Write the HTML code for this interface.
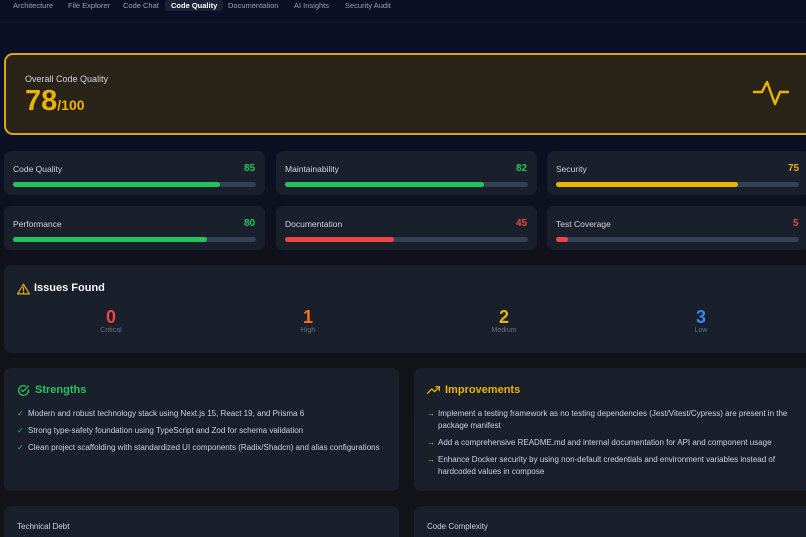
<!DOCTYPE html>
<html style="width:806px;height:537px;overflow:hidden"><head><style>
*{margin:0;padding:0;box-sizing:border-box}
body{width:806px;height:537px;overflow:hidden;font-family:"Liberation Sans",sans-serif;background:linear-gradient(#0a0f25 0,#0b1024 140px,#111318 300px,#121419 537px);color:#e5e7eb;position:relative}
.nav{position:absolute;top:0;left:0;width:806px;height:23px;border-bottom:1px solid #161b30;font-size:7.5px;color:#9ca3af}
.nav span{position:absolute;top:0;line-height:11px}
.tab{background:#1c2236;color:#fff;padding:0 6px;border-radius:3px;font-weight:bold}
.card{position:absolute;background:#1a1f2c;border-radius:7px}
.hero{position:absolute;left:4px;top:53px;width:810px;height:82px;background:#2a2418;border:2px solid #d4a614;border-radius:9px}
.lbl{position:absolute;font-size:8.5px;color:#d1d5db}
.val{position:absolute;font-size:10px;font-weight:bold}
.bar{position:absolute;height:5px;border-radius:3px;background:#334155}
.bar i{display:block;height:5px;border-radius:3px}
.g{color:#22c55e}.r{color:#ef4444}.y{color:#eab308}.o{color:#f97316}.b{color:#3b82f6}
ul{list-style:none}
li{font-size:8px;color:#cbd5e1;position:relative;padding-left:11px;line-height:12px;margin-bottom:5px}
li b{position:absolute;left:0;font-weight:normal}
</style></head><body>
<div class="nav">
<span style="left:13px">Architecture</span>
<span style="left:68px">File Explorer</span>
<span style="left:123px">Code Chat</span>
<span class="tab" style="left:165px">Code Quality</span>
<span style="left:228px">Documentation</span>
<span style="left:294px">AI Insights</span>
<span style="left:345px">Security Audit</span>
</div>
<div class="hero">
<div style="position:absolute;left:19px;top:19px;font-size:9px;color:#d1d5db">Overall Code Quality</div>
<div style="position:absolute;left:19px;top:30px;color:#eab308;font-weight:bold"><span style="font-size:29px">78</span><span style="font-size:14px">/100</span></div>
<svg style="position:absolute;left:746px;top:22px" width="38" height="34" viewBox="0 0 38 34"><path d="M2 15h8l5-10 8 22 5-12h8" fill="none" stroke="#eab308" stroke-width="2.4" stroke-linecap="round" stroke-linejoin="round"/></svg>
</div>

<div class="card" style="left:4px;top:151px;width:261px;height:44px"></div>
<div class="card" style="left:276px;top:151px;width:261px;height:44px"></div>
<div class="card" style="left:547px;top:151px;width:262px;height:44px"></div>
<div class="card" style="left:4px;top:206px;width:261px;height:44px"></div>
<div class="card" style="left:276px;top:206px;width:261px;height:44px"></div>
<div class="card" style="left:547px;top:206px;width:262px;height:44px"></div>

<div class="lbl" style="left:13px;top:164px">Code Quality</div><div class="val g" style="left:244px;top:163px">85</div>
<div class="bar" style="left:13px;top:182px;width:243px"><i style="width:85%;background:#22c55e"></i></div>
<div class="lbl" style="left:285px;top:164px">Maintainability</div><div class="val g" style="left:516px;top:163px">82</div>
<div class="bar" style="left:285px;top:182px;width:243px"><i style="width:82%;background:#22c55e"></i></div>
<div class="lbl" style="left:556px;top:164px">Security</div><div class="val y" style="left:788px;top:163px">75</div>
<div class="bar" style="left:556px;top:182px;width:243px"><i style="width:75%;background:#eab308"></i></div>

<div class="lbl" style="left:13px;top:219px">Performance</div><div class="val g" style="left:244px;top:218px">80</div>
<div class="bar" style="left:13px;top:237px;width:243px"><i style="width:80%;background:#22c55e"></i></div>
<div class="lbl" style="left:285px;top:219px">Documentation</div><div class="val r" style="left:516px;top:218px">45</div>
<div class="bar" style="left:285px;top:237px;width:243px"><i style="width:45%;background:#ef4444"></i></div>
<div class="lbl" style="left:556px;top:219px">Test Coverage</div><div class="val r" style="left:793px;top:218px">5</div>
<div class="bar" style="left:556px;top:237px;width:243px"><i style="width:5%;background:#ef4444"></i></div>

<div class="card" style="left:4px;top:265px;width:810px;height:88px">
<svg style="position:absolute;left:13px;top:18px" width="13" height="12" viewBox="0 0 24 22"><path d="M12 2L1 20h22z M12 8v6 M12 17v1" fill="none" stroke="#eab308" stroke-width="2.2" stroke-linejoin="round" stroke-linecap="round"/></svg>
<div style="position:absolute;left:30px;top:17px;font-size:11px;font-weight:bold;color:#f3f4f6">Issues Found</div>
</div>
<div style="position:absolute;left:61px;width:100px;top:307px;text-align:center"><div class="r" style="font-size:18px;font-weight:bold;line-height:20px">0</div><div style="font-size:7px;color:#64748b">Critical</div></div>
<div style="position:absolute;left:258px;width:100px;top:307px;text-align:center"><div class="o" style="font-size:18px;font-weight:bold;line-height:20px">1</div><div style="font-size:7px;color:#64748b">High</div></div>
<div style="position:absolute;left:454px;width:100px;top:307px;text-align:center"><div class="y" style="font-size:18px;font-weight:bold;line-height:20px">2</div><div style="font-size:7px;color:#64748b">Medium</div></div>
<div style="position:absolute;left:651px;width:100px;top:307px;text-align:center"><div class="b" style="font-size:18px;font-weight:bold;line-height:20px">3</div><div style="font-size:7px;color:#64748b">Low</div></div>

<div class="card" style="left:4px;top:368px;width:395px;height:123px">
<svg style="position:absolute;left:13px;top:16px" width="13" height="13" viewBox="0 0 24 24"><path d="M21 11v1a9 9 0 1 1-5.3-8.2 M8 11l3 3 10-10" fill="none" stroke="#22c55e" stroke-width="2.4" stroke-linecap="round" stroke-linejoin="round"/></svg>
<div style="position:absolute;left:31px;top:16px;font-size:11px;font-weight:bold;color:#22c55e">Strengths</div>
<ul style="position:absolute;left:13px;top:40px;width:380px">
<li><b class="g">✓</b>Modern and robust technology stack using Next.js 15, React 19, and Prisma 6</li>
<li><b class="g">✓</b>Strong type-safety foundation using TypeScript and Zod for schema validation</li>
<li><b class="g">✓</b>Clean project scaffolding with standardized UI components (Radix/Shadcn) and alias configurations</li>
</ul></div>

<div class="card" style="left:414px;top:368px;width:400px;height:123px">
<svg style="position:absolute;left:13px;top:17px" width="13" height="10" viewBox="0 0 24 16"><path d="M1 14l8-8 5 5 9-9 M16 2h7v7" fill="none" stroke="#eab308" stroke-width="2.4" stroke-linecap="round" stroke-linejoin="round"/></svg>
<div style="position:absolute;left:31px;top:16px;font-size:11px;font-weight:bold;color:#eab308">Improvements</div>
<ul style="position:absolute;left:13px;top:40px;width:370px">
<li><b class="y">→</b>Implement a testing framework as no testing dependencies (Jest/Vitest/Cypress) are present in the package manifest</li>
<li><b class="y">→</b>Add a comprehensive README.md and internal documentation for API and component usage</li>
<li><b class="y">→</b>Enhance Docker security by using non-default credentials and environment variables instead of hardcoded values in compose</li>
</ul></div>

<div class="card" style="left:4px;top:506px;width:395px;height:31px;border-radius:7px 7px 0 0"><div style="position:absolute;left:13px;top:16px;font-size:8px;color:#cbd5e1">Technical Debt</div></div>
<div class="card" style="left:414px;top:506px;width:392px;height:31px;border-radius:7px 0 0 0"><div style="position:absolute;left:13px;top:16px;font-size:8px;color:#cbd5e1">Code Complexity</div></div>
</body></html>
